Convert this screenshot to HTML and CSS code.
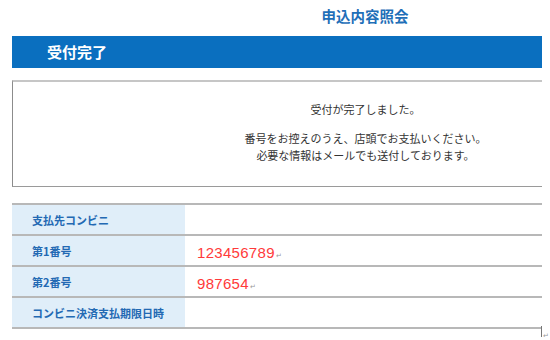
FILE: index.html
```html
<!DOCTYPE html>
<html lang="ja">
<head>
    <meta charset="UTF-8">
    <meta name="viewport" content="width=device-width, initial-scale=1.0">
    <title>申込内容照会</title>
    <link rel="stylesheet" href="styles.css">
</head>
<body>
    <div class="page">
        <h1 class="title">申込内容照会</h1>
        <div class="bar">受付完了</div>
        <div class="message">
            <p>受付が完了しました。</p>
            <p>番号をお控えのうえ、店頭でお支払いください。<br>必要な情報はメールでも送付しております。</p>
        </div>
        <table class="info">
            <tr>
                <th>支払先コンビニ</th>
                <td></td>
            </tr>
            <tr>
                <th>第1番号</th>
                <td><span class="num">123456789</span><span class="mark">↵</span></td>
            </tr>
            <tr>
                <th>第2番号</th>
                <td><span class="num">987654</span><span class="mark">↵</span></td>
            </tr>
            <tr>
                <th>コンビニ決済支払期限日時</th>
                <td></td>
            </tr>
        </table>
        <div class="end-mark"><span class="mark">↵</span></div>
    </div>
</body>
</html>
```

FILE: styles.css
```css
* {
    padding: 0;
    margin: 0;
    box-sizing: border-box;
}
body {
    font-family: "Noto Sans CJK JP", "Noto Sans", sans-serif;
    background-color: #fff;
    overflow: hidden;
}
.page {
    width: 530px;
    margin-left: 12px;
}
.title {
    padding: 6px 0 0 176px;
    height: 26px;
    margin-bottom: 10px;
    text-align: center;
    font-size: 14.5px;
    line-height: 20px;
    font-weight: bold;
    color: #1f6fb8;
}
.bar {
    height: 32px;
    line-height: 32px;
    padding-left: 35px;
    background-color: #0a6fbf;
    color: #fff;
    font-size: 15px;
    font-weight: bold;
}
.message {
    margin-top: 12px;
    height: 107px;
    padding: 19px 0 0 176px;
    border-top: 2px solid #c6c6c6;
    border-left: 1px solid #8c8c8c;
    border-bottom: 1px solid #9a9a9a;
    text-align: center;
    font-size: 11px;
    line-height: 17px;
    color: #333;
}
.message p + p {
    margin-top: 12px;
}
.info {
    width: 100%;
    margin-top: 16px;
    border-collapse: collapse;
}
.info tr {
    border-top: 2px solid #b8b8b8;
    border-bottom: 2px solid #b8b8b8;
}
.info th,
.info td {
    height: 31px;
    vertical-align: middle;
    text-align: left;
}
.info th {
    width: 173px;
    padding-left: 20px;
    background-color: #e0eef9;
    color: #2369b3;
    font-size: 11px;
    font-weight: bold;
}
.info td {
    padding-left: 12px;
}
.num {
    color: #ff3a3a;
    font-family: "Liberation Sans", Arial, sans-serif;
    font-size: 15px;
    letter-spacing: 0.3px;
}
.mark {
    margin-left: 1px;
    color: #999;
    font-size: 7px;
}
.end-mark {
    width: 10px;
    height: 11px;
    margin: -3px 0 0 529px;
    padding-top: 1px;
    border-left: 1px solid #777;
    line-height: 8px;
}
```
